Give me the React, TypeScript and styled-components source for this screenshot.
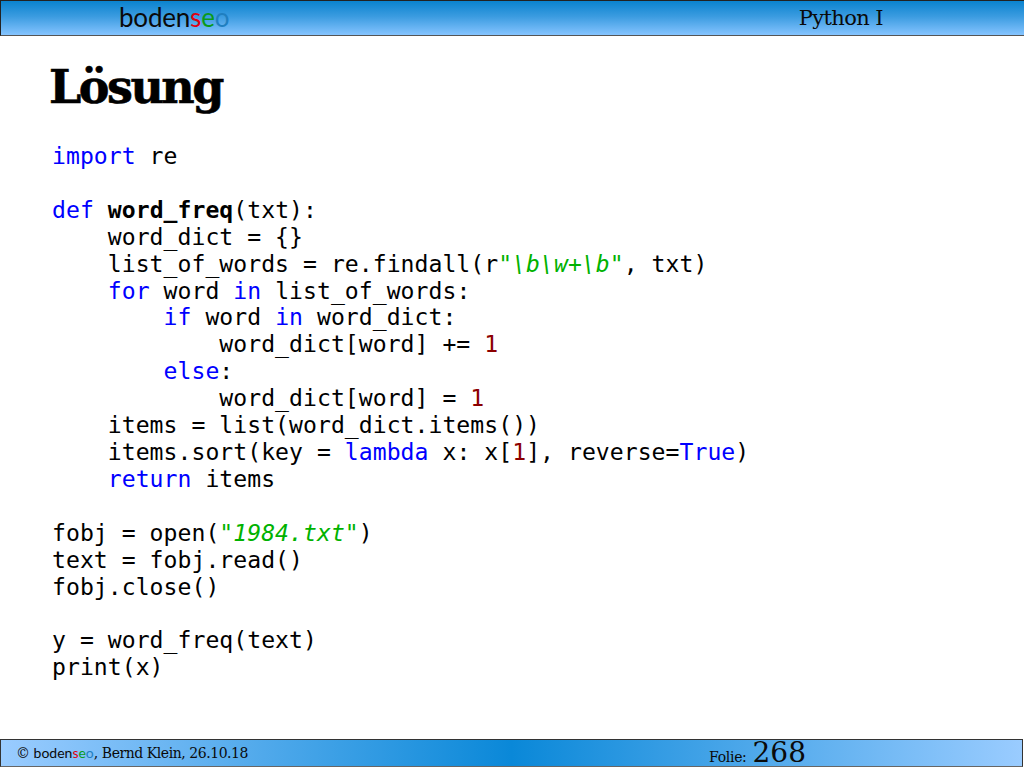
import React from 'react';
import styled, { createGlobalStyle } from 'styled-components';

const GlobalStyle = createGlobalStyle`
  html, body {
    margin: 0;
    padding: 0;
    background: #fff;
  }
`;

const Slide = styled.div`
  width: 1024px;
  height: 768px;
  display: flex;
  flex-direction: column;
  overflow: hidden;
`;

const TopBar = styled.header`
  box-sizing: border-box;
  height: 36px;
  flex: none;
  display: flex;
  align-items: center;
  justify-content: space-between;
  padding: 0 141px 2px 118px;
  border: 1px solid #222;
  border-bottom-color: #555;
  border-right: none;
  background: linear-gradient(180deg, #0a83cf 0%, #3a9be0 45%, #85c4ff 100%);
`;

const Logo = styled.div<{ $small?: boolean }>`
  font-family: 'Lato', 'Open Sans', sans-serif;
  font-size: ${(p) => (p.$small ? '14px' : '26px')};
  font-weight: 400;
  letter-spacing: ${(p) => (p.$small ? '0' : '-0.2px')};
  line-height: 1;
  color: #0a0a0a;
  display: inline-block;
`;

const LogoPart = styled.span<{ $color: string }>`
  color: ${(p) => p.$color};
`;

const CourseTitle = styled.div`
  font-family: 'DejaVu Serif', serif;
  font-size: 21px;
  letter-spacing: -0.6px;
  color: #0a0a0a;
  margin-top: 2px;
`;

const Content = styled.main`
  flex: 1;
  padding: 21px 0 0 49px;
`;

const Heading = styled.h1`
  margin: 0 0 26px;
  font-family: 'DejaVu Serif', serif;
  font-size: 46px;
  font-weight: 700;
  letter-spacing: -2.5px;
  line-height: 60px;
  color: #000;
  -webkit-text-stroke: 0.6px #000;
`;

const Code = styled.pre`
  margin: 0 0 0 3px;
  font-family: 'DejaVu Sans Mono', monospace;
  font-size: 23.1px;
  letter-spacing: 0.04px;
  line-height: 26.9px;
  color: #000;
`;

const Kw = styled.span`
  color: #0000ff;
`;

const Fn = styled.span`
  font-weight: 700;
`;

const Str = styled.span`
  color: #00b200;
`;

const Rx = styled.span`
  color: #00b200;
  font-style: italic;
`;

const Num = styled.span`
  color: #8b0000;
`;

const FootBar = styled.footer`
  box-sizing: border-box;
  width: 1023px;
  height: 28px;
  margin-bottom: 1px;
  flex: none;
  display: flex;
  align-items: center;
  padding: 0 0 0 15px;
  border: 1px solid #333;
  border-bottom-color: #666;
  background: linear-gradient(90deg, #9accff 0%, #0a88d8 50%, #9accff 100%);
  font-family: 'DejaVu Serif', serif;
  font-size: 14px;
  color: #0a0a0a;
`;

const Credit = styled.div`
  width: 693px;
  white-space: nowrap;
  letter-spacing: -0.45px;
`;

const SlideLabel = styled.div`
  display: flex;
  align-items: baseline;
  gap: 6px;
  letter-spacing: -0.3px;
`;

const SlideNumber = styled.span`
  font-size: 28px;
  line-height: 24px;
  letter-spacing: 0;
`;

const BrandName = ({ small }: { small?: boolean }) => (
  <Logo $small={small}>
    boden
    <LogoPart $color="#e00010">s</LogoPart>
    <LogoPart $color="#0a9a1a">e</LogoPart>
    <LogoPart $color="#1f7fc0">o</LogoPart>
  </Logo>
);

export default function App() {
  return (
    <Slide>
      <GlobalStyle />
      <TopBar>
        <BrandName />
        <CourseTitle>Python I</CourseTitle>
      </TopBar>
      <Content>
        <Heading>Lösung</Heading>
        <Code>
          <Kw>import</Kw> re{'\n\n'}
          <Kw>def</Kw> <Fn>word_freq</Fn>(txt):{'\n'}
          {'    '}word_dict = {'{}'}{'\n'}
          {'    '}list_of_words = re.findall(r<Str>"</Str><Rx>\b\w+\b</Rx><Str>"</Str>, txt){'\n'}
          {'    '}<Kw>for</Kw> word <Kw>in</Kw> list_of_words:{'\n'}
          {'        '}<Kw>if</Kw> word <Kw>in</Kw> word_dict:{'\n'}
          {'            '}word_dict[word] += <Num>1</Num>{'\n'}
          {'        '}<Kw>else</Kw>:{'\n'}
          {'            '}word_dict[word] = <Num>1</Num>{'\n'}
          {'    '}items = list(word_dict.items()){'\n'}
          {'    '}items.sort(key = <Kw>lambda</Kw> x: x[<Num>1</Num>], reverse=<Kw>True</Kw>){'\n'}
          {'    '}<Kw>return</Kw> items{'\n\n'}
          fobj = open(<Rx>"1984.txt"</Rx>){'\n'}
          text = fobj.read(){'\n'}
          fobj.close(){'\n\n'}
          y = word_freq(text){'\n'}
          print(x)
        </Code>
      </Content>
      <FootBar>
        <Credit>
          © <BrandName small />, Bernd Klein, 26.10.18
        </Credit>
        <SlideLabel>
          Folie: <SlideNumber>268</SlideNumber>
        </SlideLabel>
      </FootBar>
    </Slide>
  );
}
